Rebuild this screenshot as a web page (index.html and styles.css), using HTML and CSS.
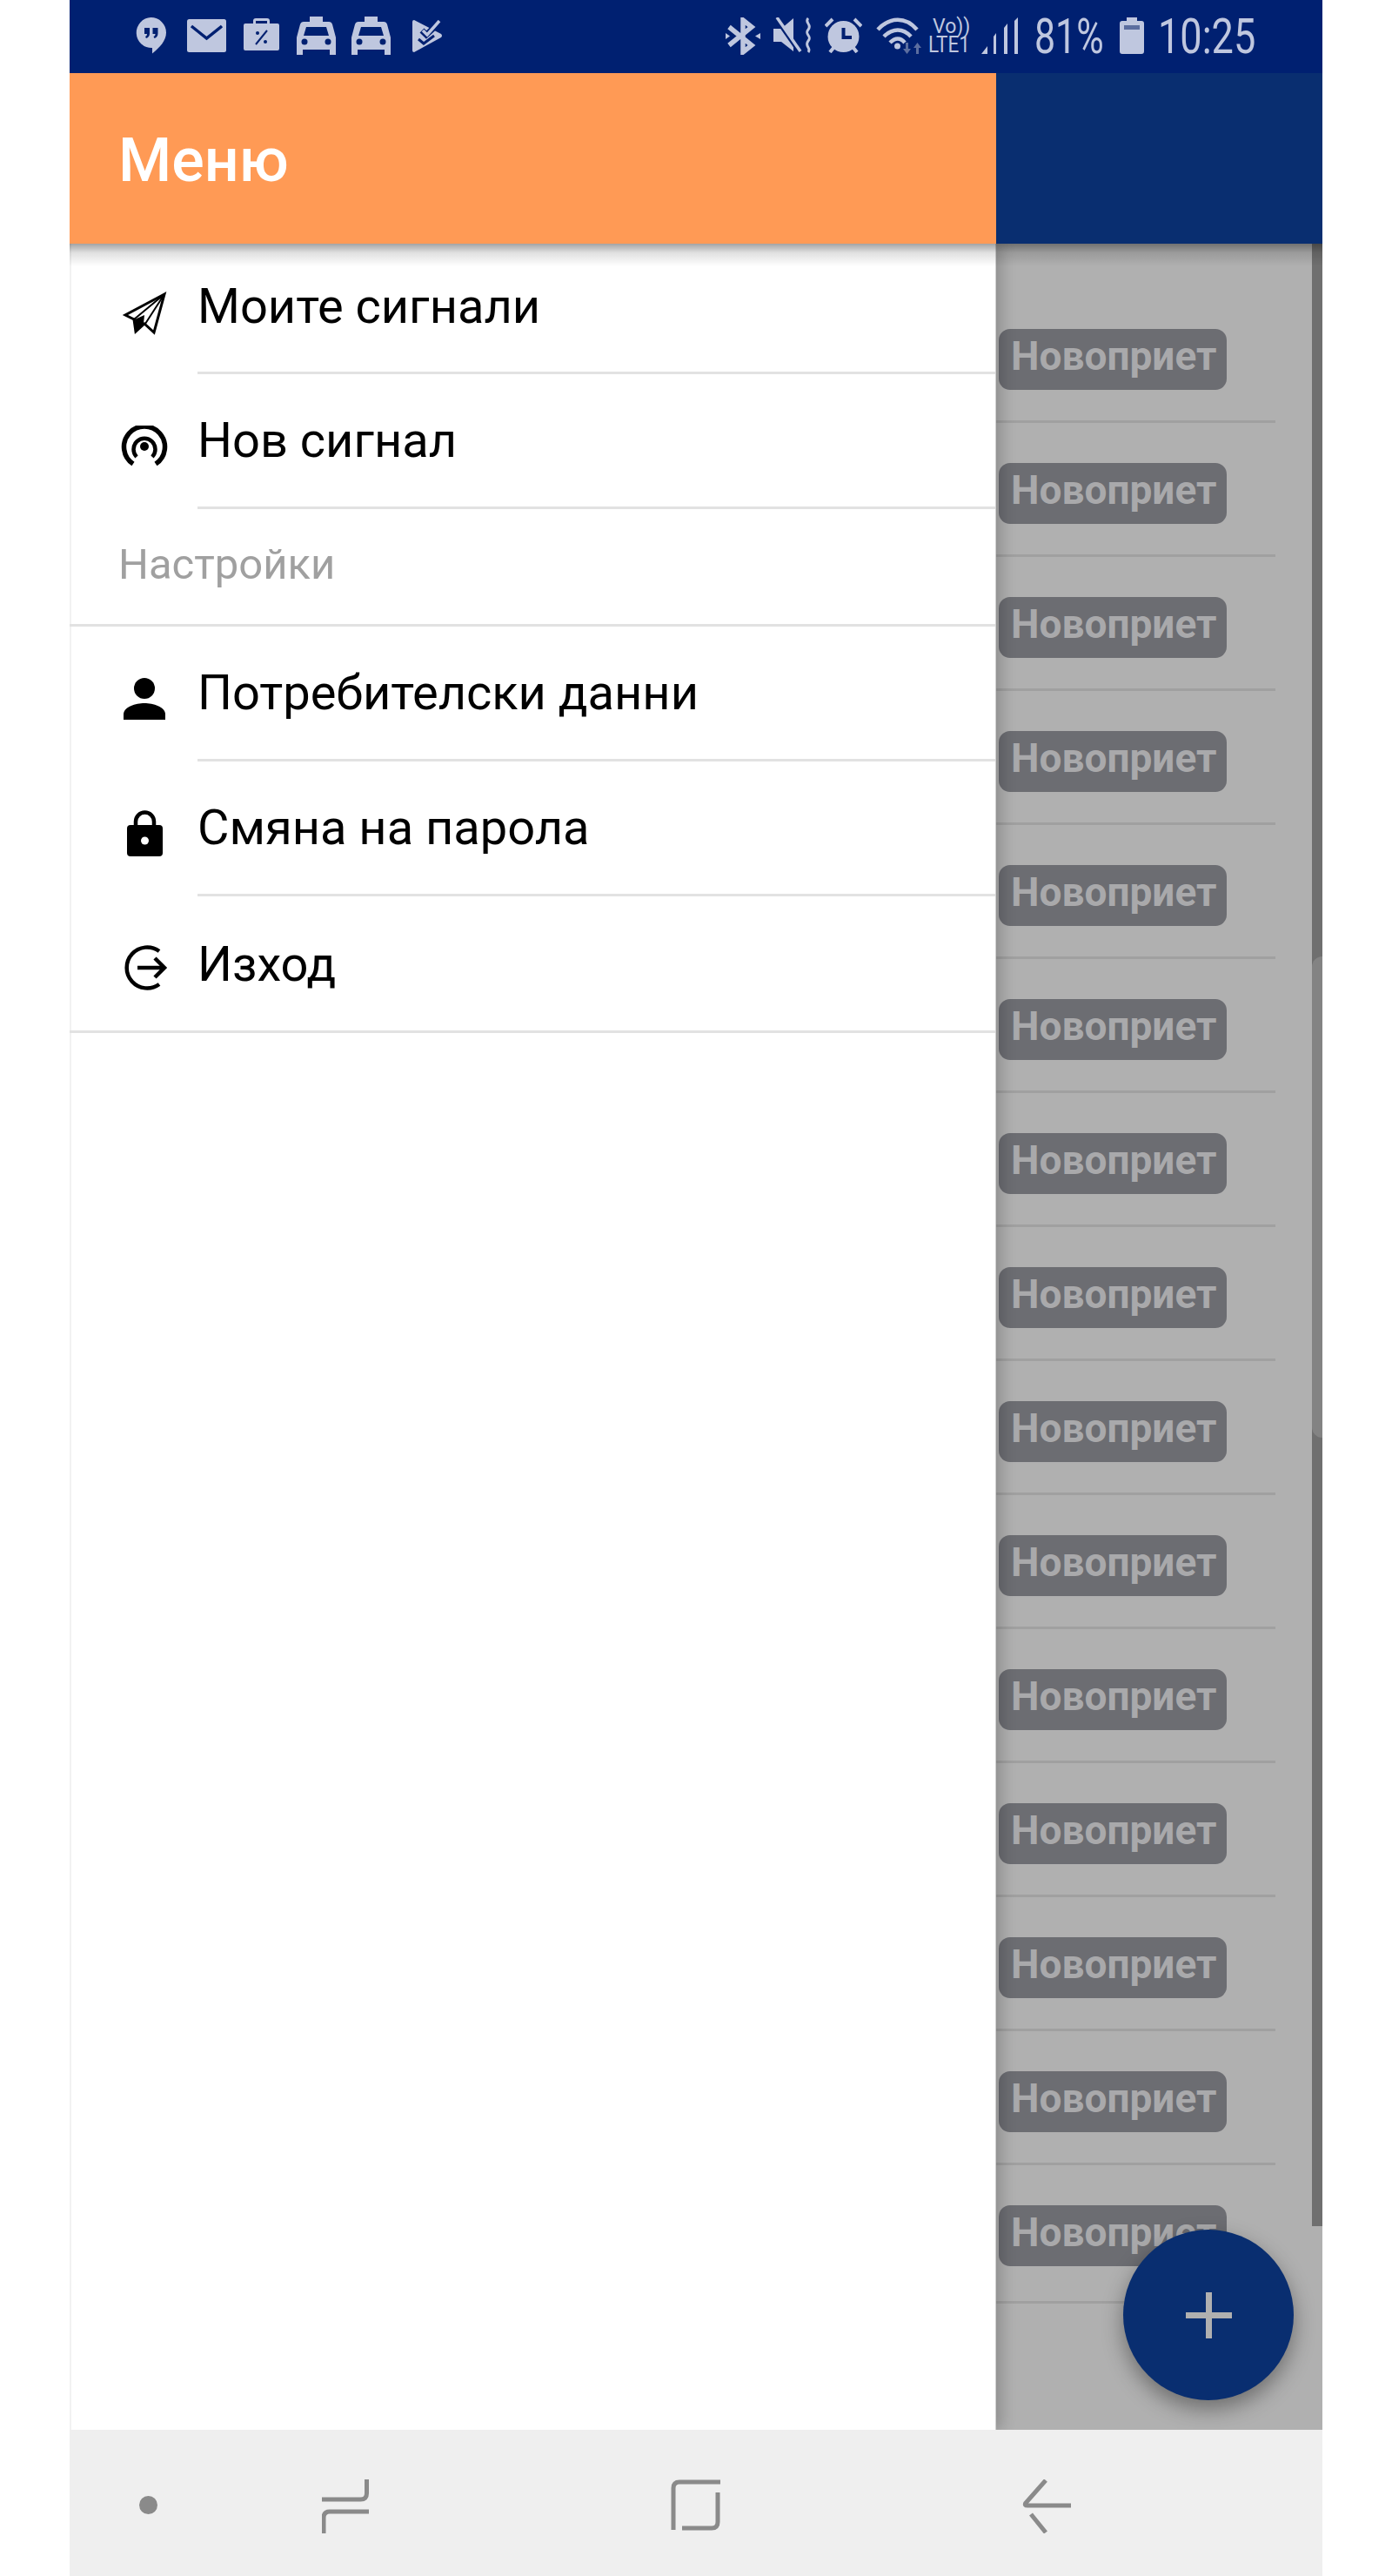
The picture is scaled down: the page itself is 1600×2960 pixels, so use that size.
FILE: index.html
```html
<!DOCTYPE html>
<html lang="bg">
<head>
<meta charset="utf-8">
<title>Меню</title>
<link rel="stylesheet" href="styles.css">
</head>
<body>
<div class="phone">
  <header class="status">
    <div class="status-left">
      <svg class="si" width="35" height="42" viewBox="0 0 35 42"><path class="l" d="M17.500 0a17.500 17.500 0 0 1 17.500 17.500C35 27 27 35 19 41.500V35A17.500 17.500 0 0 1 17.500 0z"/><path class="d" d="M10 12h6v6.500c0 3-1.500 4.500-4 5.500l-1-2c1.500-.6 2-1.500 2-3h-3zM19.500 12h6v6.500c0 3-1.500 4.500-4 5.500l-1-2c1.500-.6 2-1.500 2-3h-3z"/></svg>
      <svg class="si si-mail" width="45" height="38" viewBox="0 0 45 38"><rect class="l" width="45" height="38" rx="2.500"/><path class="ds" stroke-width="3.500" d="M5 8l17.500 14L40 8"/></svg>
      <svg class="si si-bag" width="41" height="37" viewBox="0 0 41 37"><path class="l" d="M2 6h9V3q0-3 3-3h13q3 0 3 3v3h9q2 0 2 2v27q0 2-2 2H2q-2 0-2-2V8q0-2 2-2z"/><path class="d" d="M14 3h13v3H14z"/><path class="ds" stroke-width="2" d="M27 14L14 30"/><circle class="d" cx="16" cy="17" r="2"/><circle class="d" cx="25" cy="27" r="2"/></svg>
      <svg class="si si-taxi" width="45" height="44" viewBox="0 0 45 44"><path class="l" d="M15 0h15v6h7q3 0 4 3l4 15v20h-7v-6H7v6H0V24L4 9q1-3 4-3h7z"/><path class="d" d="M8 22l3-10h23l3 10z"/><circle class="d" cx="9" cy="29" r="3.500"/><circle class="d" cx="36" cy="29" r="3.500"/></svg>
      <svg class="si si-taxi2" width="45" height="44" viewBox="0 0 45 44"><path class="l" d="M15 0h15v6h7q3 0 4 3l4 15v20h-7v-6H7v6H0V24L4 9q1-3 4-3h7z"/><path class="d" d="M8 22l3-10h23l3 10z"/><circle class="d" cx="9" cy="29" r="3.500"/><circle class="d" cx="36" cy="29" r="3.500"/></svg>
      <svg class="si si-play" width="35" height="37" viewBox="0 0 35 37"><path class="l" d="M2 0l31 16q2 2 0 4L2 37q-2 0-2-2V2q0-2 2-2z"/><path class="ds" stroke-width="7" d="M11 12l5 5L32 2"/><path class="ls" stroke-width="3.500" d="M12 12l5 5L31 1"/><path class="ds" stroke-width="3" d="M7 22l6 5 12-9"/></svg>
    </div>
    <div class="status-right">
      <svg class="si" width="40" height="43" viewBox="0 0 40 43"><path class="ls" stroke-width="5.500" d="M4 11l26 21-10 8V3l10 8L4 32"/><path class="l" d="M0 18l5 3.500-5 3.500zM40 18v7l-6-3.500z"/></svg>
      <svg class="si si-mute" width="45" height="41" viewBox="0 0 45 41"><path class="l" d="M0 13h9L23 1v38L9 28H0z"/><path class="ds" stroke-width="3" d="M1 0l27 39"/><path class="ls" stroke-width="3.500" d="M4 0l27 39"/><path class="ls" stroke-width="3" d="M40 1c-5 5 5 7 0 13s5 7 0 13 4 8 0 13"/></svg>
      <svg class="si si-alarm" width="43" height="41" viewBox="0 0 43 41"><circle class="l" cx="21.500" cy="22" r="18"/><path class="ds" stroke-width="4" d="M21.500 12v11H31"/><path class="ls" stroke-width="4" d="M1 10l8-8M42 10l-8-8M6 40l4-5M37 40l-4-5"/></svg>
      <svg class="si si-wifi" width="56" height="42" viewBox="0 0 56 42"><path class="ls" stroke-width="4.500" d="M2 14c14-15 32-15 45 0M9 22c10-10 22-10 31 0M16 29c6-6 12-6 17 0"/><circle class="l" cx="24.500" cy="33" r="3.500"/><path class="m" d="M34 29h3v7h3l-4.500 6-4.500-6h3zM46 42h3v-7h3l-4.500-6-4.500 6h3z"/></svg>
      <div class="volte"><span class="volte-top">Vo))</span><span class="volte-bot">LTE1</span></div>
      <svg class="si si-signal" width="42" height="42" viewBox="0 0 42 42"><path class="l" d="M0 42l7-9v9zM14 42V22l3-4v24zM26 42V12l4-5v35zM38 42V4l4-4v42z"/></svg>
      <span class="st st-batt">81%</span>
      <svg class="si si-batt" width="28" height="42" viewBox="0 0 28 42"><path class="l" d="M8 0h12v4h5q3 0 3 3v32q0 3-3 3H3q-3 0-3-3V7q0-3 3-3h5z"/><path class="m" d="M5 9h18v5H5z"/></svg>
      <span class="st st-time">10:25</span>
    </div>
  </header>

  <div class="appbar">
    <div class="appbar-title">Меню</div>
    <div class="appbar-rest"></div>
  </div>

  <main class="main">
    <ul class="list">
      <li class="row"><span class="badge">Новоприет</span></li>
      <li class="row"><span class="badge">Новоприет</span></li>
      <li class="row"><span class="badge">Новоприет</span></li>
      <li class="row"><span class="badge">Новоприет</span></li>
      <li class="row"><span class="badge">Новоприет</span></li>
      <li class="row"><span class="badge">Новоприет</span></li>
      <li class="row"><span class="badge">Новоприет</span></li>
      <li class="row"><span class="badge">Новоприет</span></li>
      <li class="row"><span class="badge">Новоприет</span></li>
      <li class="row"><span class="badge">Новоприет</span></li>
      <li class="row"><span class="badge">Новоприет</span></li>
      <li class="row"><span class="badge">Новоприет</span></li>
      <li class="row"><span class="badge">Новоприет</span></li>
      <li class="row"><span class="badge">Новоприет</span></li>
      <li class="row"><span class="badge">Новоприет</span></li>
    </ul>

    <div class="scrollbar"><div class="thumb"></div></div>

    <button class="fab" type="button" aria-label="Нов сигнал">
      <svg width="53" height="53" viewBox="0 0 53 53"><path class="plus" d="M23 0h7v23h23v7H30v23h-7V30H0v-7h23z"/></svg>
    </button>

    <nav class="drawer">
      <a class="item item-first">
        <span class="ico"><svg width="52" height="51" viewBox="0 0 52 51"><path class="ks ks-miter" stroke-width="3" d="M49 3L4 27l10 5 2 14 10-9 11 10z"/><path class="ks" stroke-width="2" d="M49 3L14 32M49 3L27 37"/><path class="k" d="M15 32l11-5-1 10-9 9z"/></svg></span>
        <span class="label">Моите сигнали</span>
      </a>
      <a class="item">
        <span class="ico"><svg width="54" height="48" viewBox="0 0 54 48"><path class="ks" stroke-width="5.500" d="M14 44a23.500 23.500 0 1 1 26 0"/><path class="ks" stroke-width="4.500" d="M18 36a12.500 12.500 0 1 1 18 0"/><circle class="k" cx="27" cy="24" r="5"/></svg></span>
        <span class="label">Нов сигнал</span>
      </a>
      <div class="section">Настройки</div>
      <a class="item">
        <span class="ico"><svg width="48" height="48" viewBox="0 0 48 48"><ellipse class="k" cx="24" cy="12" rx="12" ry="12"/><path class="k" d="M0 48v-6c0-9 14-13 24-13s24 4 24 13v6z"/></svg></span>
        <span class="label">Потребителски данни</span>
      </a>
      <a class="item">
        <span class="ico"><svg width="41" height="53" viewBox="0 0 41 53"><path class="ks" stroke-width="4.500" d="M10 20v-7a10.500 10.500 0 0 1 21 0v7"/><rect class="k" y="17" width="41" height="36" rx="4"/><circle class="w" cx="20.500" cy="35" r="4.500"/></svg></span>
        <span class="label">Смяна на парола</span>
      </a>
      <a class="item item-last">
        <span class="ico"><svg width="53" height="52" viewBox="0 0 53 52"><path class="ks" stroke-width="4.500" d="M43 7a23.500 23.500 0 1 0 0 38"/><path class="ks" stroke-width="4.500" d="M18 26h30M38 15l11 11-11 11"/></svg></span>
        <span class="label">Изход</span>
      </a>
    </nav>
  </main>

  <footer class="navbar">
    <span class="dot"></span>
    <svg class="nv" width="54" height="62" viewBox="0 0 54 62"><path class="ns" d="M51.500 0v16q0 7-7 7H0" /><path class="ns" d="M54 37H9q-7 0-7 7v18"/></svg>
    <svg class="nv nv-home" width="57" height="60" viewBox="0 0 57 60"><path class="ns" d="M57 3H10q-7 0-7 7v48"/><path class="ns" d="M54 15v34q0 7-7 7H13"/></svg>
    <svg class="nv" width="56" height="62" viewBox="0 0 56 62"><path class="ns" d="M27 1L4 27q-2 3 2 3h50"/><path class="ns" d="M10 40l17 21"/></svg>
  </footer>
</div>
</body>
</html>
```

FILE: styles.css
```css
* { box-sizing: border-box; }
html, body { margin: 0; padding: 0; background: #fff; }
body { font-family: Roboto, "Noto Sans", sans-serif; }

.phone {
  width: 1440px;
  height: 2960px;
  margin-left: 80px;
  display: flex;
  flex-direction: column;
  overflow: hidden;
}

/* status bar */
.status {
  height: 84px;
  flex: none;
  background: #002071;
  display: flex;
  position: relative;
}
.status-left { display: flex; align-items: flex-start; padding: 20px 0 0 76px; }
.status-right { display: flex; align-items: flex-start; padding: 20px 0 0 0; margin-left: 325px; }
.si { display: block; flex: none; margin-left: 0; }
.si-mail { margin: 2px 0 0 24px; }
.si-bag { margin: 1px 0 0 20px; }
.si-taxi { margin: -1px 0 0 20px; }
.si-taxi2 { margin: -1px 0 0 18px; }
.si-play { margin: 3px 0 0 25px; }
.si-mute { margin-left: 15px; }
.si-alarm { margin-left: 14px; }
.si-wifi { margin-left: 16px; }
.si-signal { margin-left: 10px; }
.si-batt { margin-left: 16px; }
.l { fill: #bfc7df; }
.d { fill: #002071; }
.m { fill: #5c6e9f; }
.ls { fill: none; stroke: #bfc7df; }
.ds { fill: none; stroke: #002071; }
.st {
  display: block;
  flex: none;
  color: #bfc7df;
  font-size: 55px;
  font-weight: 400;
  line-height: 42px;
  transform-origin: left top;
  white-space: nowrap;
}
.st-batt { width: 82px; margin: 1px 0 0 19px; transform: scaleX(.78); }
.st-time { width: 113px; margin: 1px 0 0 16px; transform: scaleX(.82); }
.volte {
  width: 51px;
  height: 42px;
  flex: none;
  margin-left: 4px;
  color: #bfc7df;
  display: flex;
  flex-direction: column;
}
.volte-top { display: block; font-size: 23px; line-height: 21px; padding-left: 5px; }
.volte-bot {
  display: block;
  font-size: 25px;
  line-height: 21px;
  transform: scaleX(.9);
  transform-origin: left top;
}

/* app bar */
.appbar {
  height: 196px;
  flex: none;
  display: flex;
  position: relative;
  z-index: 3;
}
.appbar::after {
  content: "";
  position: absolute;
  left: 0;
  right: 0;
  top: 100%;
  height: 26px;
  background: linear-gradient(rgba(0,0,0,.36), rgba(0,0,0,.12) 40%, rgba(0,0,0,0));
}
.appbar-title {
  width: 1065px;
  flex: none;
  background: #ff9a55;
  color: #fff;
  font-size: 70px;
  font-weight: 500;
  line-height: 196px;
  padding: 2px 0 0 56px;
}
.appbar-rest { flex: 1; background: #092e70; }

/* list under the drawer */
.main {
  flex: 1;
  position: relative;
  background: #b0b0b0;
  overflow: hidden;
}
.list {
  list-style: none;
  margin: 0 0 0 1065px;
  padding: 52px 0 0;
  width: 321px;
}
.row {
  height: 154px;
  padding: 46px 0 0 3px;
  border-bottom: 3px solid #a0a0a0;
}
.row:last-child { height: 159px; }
.badge {
  display: block;
  width: 262px;
  height: 70px;
  background: #6c6d72;
  border-radius: 13px;
  color: #a9a9ab;
  font-size: 46px;
  font-weight: 700;
  line-height: 62px;
  padding-left: 14px;
  white-space: nowrap;
  overflow: hidden;
}

.scrollbar {
  position: absolute;
  right: 0;
  top: 0;
  width: 12px;
  height: 2278px;
  background: #6f6f6f;
  padding-top: 819px;
}
.thumb {
  height: 553px;
  background: #838383;
  border-radius: 12px 0 0 12px;
}

.fab {
  position: absolute;
  right: 33px;
  bottom: 34px;
  width: 196px;
  height: 196px;
  border: 0;
  padding: 0;
  border-radius: 50%;
  background: #092e70;
  box-shadow: 0 10px 24px rgba(0,0,0,.38);
  display: flex;
  align-items: center;
  justify-content: center;
}
.plus { fill: #b0b0b0; }

/* drawer */
.drawer {
  position: absolute;
  left: 0;
  top: 0;
  bottom: 0;
  width: 1065px;
  background: #fff;
  border-left: 2px solid #f2f2f2;
  border-right: 1px solid #d0d0d0;
  box-shadow: 6px 0 16px rgba(0,0,0,.2);
}
.item {
  display: flex;
  height: 155px;
  margin-left: -2px;
  color: #000;
}
.item-first { height: 150px; }
.item-first .label { padding-bottom: 3px; }
.item-last { height: 157px; border-bottom: 3px solid #e2e2e2; }
.item-last .label { padding-top: 2px; border-bottom: 0; }
.ico {
  width: 147px;
  flex: none;
  padding: 10px 35px 0 60px;
  display: flex;
  align-items: center;
  justify-content: center;
}
.ico svg { display: block; flex: none; }
.label {
  flex: 1;
  font-size: 56px;
  line-height: 1;
  display: flex;
  align-items: center;
  border-bottom: 3px solid #e2e2e2;
  white-space: nowrap;
}
.section {
  height: 135px;
  margin-left: -2px;
  padding: 33px 0 0 56px;
  font-size: 49px;
  line-height: 62px;
  color: #a0a0a0;
  border-bottom: 3px solid #e2e2e2;
}
.k { fill: #000; }
.w { fill: #fff; }
.ks { fill: none; stroke: #000; }
.ks-miter { stroke-linejoin: miter; }

/* navigation bar */
.navbar {
  height: 168px;
  flex: none;
  background: #efefef;
  position: relative;
  z-index: 4;
  display: grid;
  grid-template-columns: 210px 401px 404px auto;
  padding: 57px 0 0 80px;
  align-items: start;
}
.dot {
  display: block;
  width: 21px;
  height: 21px;
  border-radius: 50%;
  background: #8a8a8a;
  margin-top: 19px;
}
.nv { display: block; }
.ns { fill: none; stroke: #8a8a8a; stroke-width: 5; }
```
